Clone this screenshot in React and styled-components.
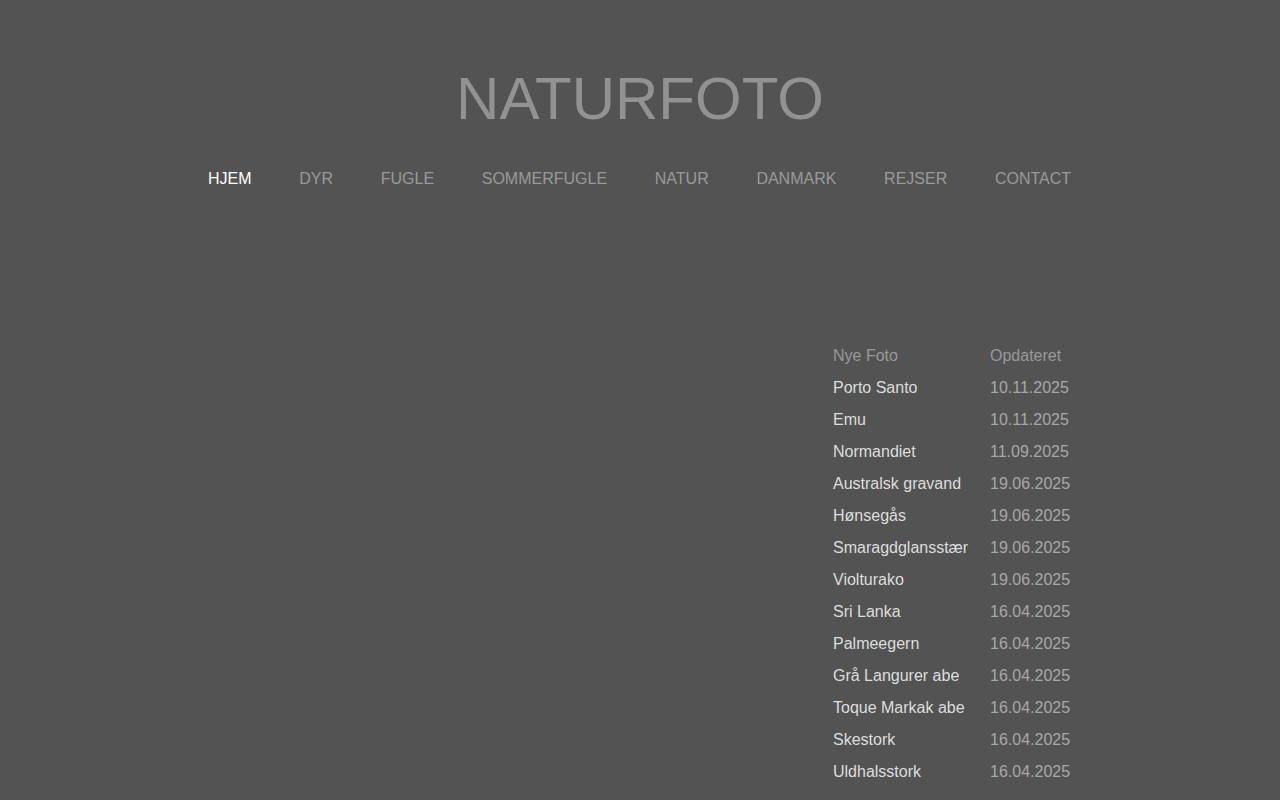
import React from "react";
import styled, { createGlobalStyle } from "styled-components";

const Global = createGlobalStyle`
  html, body { margin: 0; padding: 0; background: #535353; }
  body { font-family: "Liberation Sans", Arial, sans-serif; }
`;

const Page = styled.div`
  width: 864px;
  margin: 0 auto;
  padding-top: 64px;
  display: flex;
  flex-direction: column;
`;

const Title = styled.h1`
  margin: 0;
  text-align: center;
  font-weight: normal;
  font-size: 60px;
  line-height: 70px;
  color: #929292;
`;

const Nav = styled.nav`
  display: flex;
  justify-content: center;
  gap: 47.7px;
  margin-top: 36px;
  padding-right: 1px;
`;

const NavLink = styled.a`
  font-size: 16px;
  line-height: 18px;
  color: ${(p) => (p.$active ? "#ffffff" : "#9a9a9a")};
  text-decoration: none;
  cursor: pointer;
`;

const Content = styled.div`
  display: flex;
  justify-content: flex-end;
  margin-top: 152px;
  padding-right: 2px;
`;

const Table = styled.div`
  display: grid;
  grid-template-columns: 157px 80px;
`;

const Cell = styled.div`
  font-size: 16px;
  line-height: 32px;
  white-space: nowrap;
  color: ${(p) => p.$color};
`;

const rows = [
  ["Porto Santo", "10.11.2025"],
  ["Emu", "10.11.2025"],
  ["Normandiet", "11.09.2025"],
  ["Australsk gravand", "19.06.2025"],
  ["Hønsegås", "19.06.2025"],
  ["Smaragdglansstær", "19.06.2025"],
  ["Violturako", "19.06.2025"],
  ["Sri Lanka", "16.04.2025"],
  ["Palmeegern", "16.04.2025"],
  ["Grå Langurer abe", "16.04.2025"],
  ["Toque Markak abe", "16.04.2025"],
  ["Skestork", "16.04.2025"],
  ["Uldhalsstork", "16.04.2025"],
];

const navItems = ["HJEM", "DYR", "FUGLE", "SOMMERFUGLE", "NATUR", "DANMARK", "REJSER", "CONTACT"];

export default function App() {
  return (
    <>
      <Global />
      <Page>
        <Title>NATURFOTO</Title>
        <Nav>
          {navItems.map((n, i) => (
            <NavLink key={n} $active={i === 0}>{n}</NavLink>
          ))}
        </Nav>
        <Content>
          <Table>
            <Cell $color="#999999">Nye Foto</Cell>
            <Cell $color="#999999">Opdateret</Cell>
            {rows.map(([name, date]) => (
              <React.Fragment key={name}>
                <Cell $color="#dddddd">{name}</Cell>
                <Cell $color="#a8a8a8">{date}</Cell>
              </React.Fragment>
            ))}
          </Table>
        </Content>
      </Page>
    </>
  );
}
